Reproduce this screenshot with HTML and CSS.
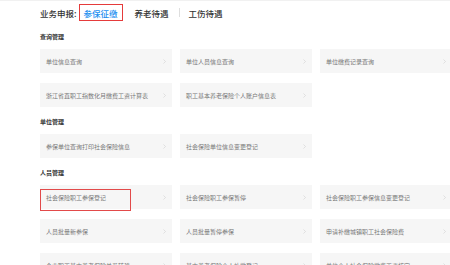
FILE: index.html
```html
<!DOCTYPE html>
<html lang="zh-CN">
<head>
<meta charset="utf-8">
<link rel="stylesheet" href="styles.css">
</head>
<body>
<div class="page">
  <div class="header">
    <span class="label">业务申报:</span>
    <span class="tab active">参保征缴</span>
    <span class="tab">养老待遇</span>
    <span class="sep"></span>
    <span class="tab">工伤待遇</span>
  </div>

  <div class="section">
    <div class="section-title">查询管理</div>
    <div class="grid">
      <div class="card"><span class="txt">单位信息查询</span><svg class="chev" viewBox="0 0 3 5"><path d="M0.5 0.5L2.5 2.5L0.5 4.5"/></svg></div>
      <div class="card"><span class="txt">单位人员信息查询</span><svg class="chev" viewBox="0 0 3 5"><path d="M0.5 0.5L2.5 2.5L0.5 4.5"/></svg></div>
      <div class="card"><span class="txt">单位缴费记录查询</span><svg class="chev" viewBox="0 0 3 5"><path d="M0.5 0.5L2.5 2.5L0.5 4.5"/></svg></div>
      <div class="card"><span class="txt">浙江省直职工指数化月缴费工资计算表</span><svg class="chev" viewBox="0 0 3 5"><path d="M0.5 0.5L2.5 2.5L0.5 4.5"/></svg></div>
      <div class="card"><span class="txt">职工基本养老保险个人账户信息表</span><svg class="chev" viewBox="0 0 3 5"><path d="M0.5 0.5L2.5 2.5L0.5 4.5"/></svg></div>
    </div>
  </div>

  <div class="section">
    <div class="section-title">单位管理</div>
    <div class="grid">
      <div class="card"><span class="txt">参保单位查询打印社会保险信息</span><svg class="chev" viewBox="0 0 3 5"><path d="M0.5 0.5L2.5 2.5L0.5 4.5"/></svg></div>
      <div class="card"><span class="txt">社会保险单位信息变更登记</span><svg class="chev" viewBox="0 0 3 5"><path d="M0.5 0.5L2.5 2.5L0.5 4.5"/></svg></div>
    </div>
  </div>

  <div class="section">
    <div class="section-title">人员管理</div>
    <div class="grid">
      <div class="card"><span class="txt">社会保险职工参保登记</span><span class="mark"></span><svg class="chev" viewBox="0 0 3 5"><path d="M0.5 0.5L2.5 2.5L0.5 4.5"/></svg></div>
      <div class="card"><span class="txt">社会保险职工参保暂停</span><svg class="chev" viewBox="0 0 3 5"><path d="M0.5 0.5L2.5 2.5L0.5 4.5"/></svg></div>
      <div class="card"><span class="txt">社会保险职工参保信息变更登记</span><svg class="chev" viewBox="0 0 3 5"><path d="M0.5 0.5L2.5 2.5L0.5 4.5"/></svg></div>
      <div class="card"><span class="txt">人员批量新参保</span><svg class="chev" viewBox="0 0 3 5"><path d="M0.5 0.5L2.5 2.5L0.5 4.5"/></svg></div>
      <div class="card"><span class="txt">人员批量暂停参保</span><svg class="chev" viewBox="0 0 3 5"><path d="M0.5 0.5L2.5 2.5L0.5 4.5"/></svg></div>
      <div class="card"><span class="txt">申请补缴城镇职工社会保险费</span><svg class="chev" viewBox="0 0 3 5"><path d="M0.5 0.5L2.5 2.5L0.5 4.5"/></svg></div>
      <div class="card"><span class="txt">企业职工基本养老保险关系转移</span><svg class="chev" viewBox="0 0 3 5"><path d="M0.5 0.5L2.5 2.5L0.5 4.5"/></svg></div>
      <div class="card"><span class="txt">基本养老保险个人补缴登记</span><svg class="chev" viewBox="0 0 3 5"><path d="M0.5 0.5L2.5 2.5L0.5 4.5"/></svg></div>
      <div class="card"><span class="txt">单位个人社会保险缴费工资核定</span><svg class="chev" viewBox="0 0 3 5"><path d="M0.5 0.5L2.5 2.5L0.5 4.5"/></svg></div>
    </div>
  </div>
</div>
</body>
</html>
```

FILE: styles.css
```css
html, body {
  margin: 0;
  padding: 0;
  background: #ffffff;
  overflow: hidden;
}
body {
  width: 450px;
  height: 265px;
  font-family: "Noto Sans CJK SC", "Noto Sans", sans-serif;
  color: #333;
}
.page {
  border-top: 1px solid #f1f1f1;
  padding-left: 40px;
  width: 460px;
}
.header {
  display: flex;
  align-items: center;
  height: 17px;
  margin-top: 3px;
  font-size: 8.5px;
  font-weight: 500;
  color: #333;
}
.label {
  margin-right: 2px;
}
.tab {
  height: 17px;
  line-height: 17px;
  padding: 0 4px;
  margin-right: 5px;
  box-sizing: border-box;
  border: 1px solid transparent;
}
.tab.active {
  color: #1c8ff0;
  border-color: #e53b3b;
  padding: 0 4px;
  margin-right: 7px;
}
.sep {
  width: 1px;
  height: 9px;
  background: #dedede;
  margin: 0 4px 0 0;
}
.section {
  margin-top: 12px;
}
.section + .section {
  margin-top: 11px;
}
.section-title {
  font-size: 6px;
  font-weight: 700;
  line-height: 8px;
  height: 8px;
  color: #333;
  margin-bottom: 8px;
}
.grid {
  display: grid;
  grid-template-columns: 132px 132px 132px;
  column-gap: 8px;
  row-gap: 10px;
}
.card {
  position: relative;
  height: 24px;
  background: #f6f6f6;
  display: flex;
  align-items: center;
  justify-content: space-between;
  padding: 0 6px;
  box-sizing: border-box;
}
.txt {
  font-size: 6px;
  color: #777;
  white-space: nowrap;
}
.chev {
  width: 3px;
  height: 5px;
  fill: none;
  stroke: #d2d2d2;
  stroke-width: 0.6;
}
.mark {
  position: absolute;
  left: 0;
  top: 4px;
  width: 91px;
  height: 22px;
  border: 1px solid #e24a4a;
  box-sizing: border-box;
}
```
